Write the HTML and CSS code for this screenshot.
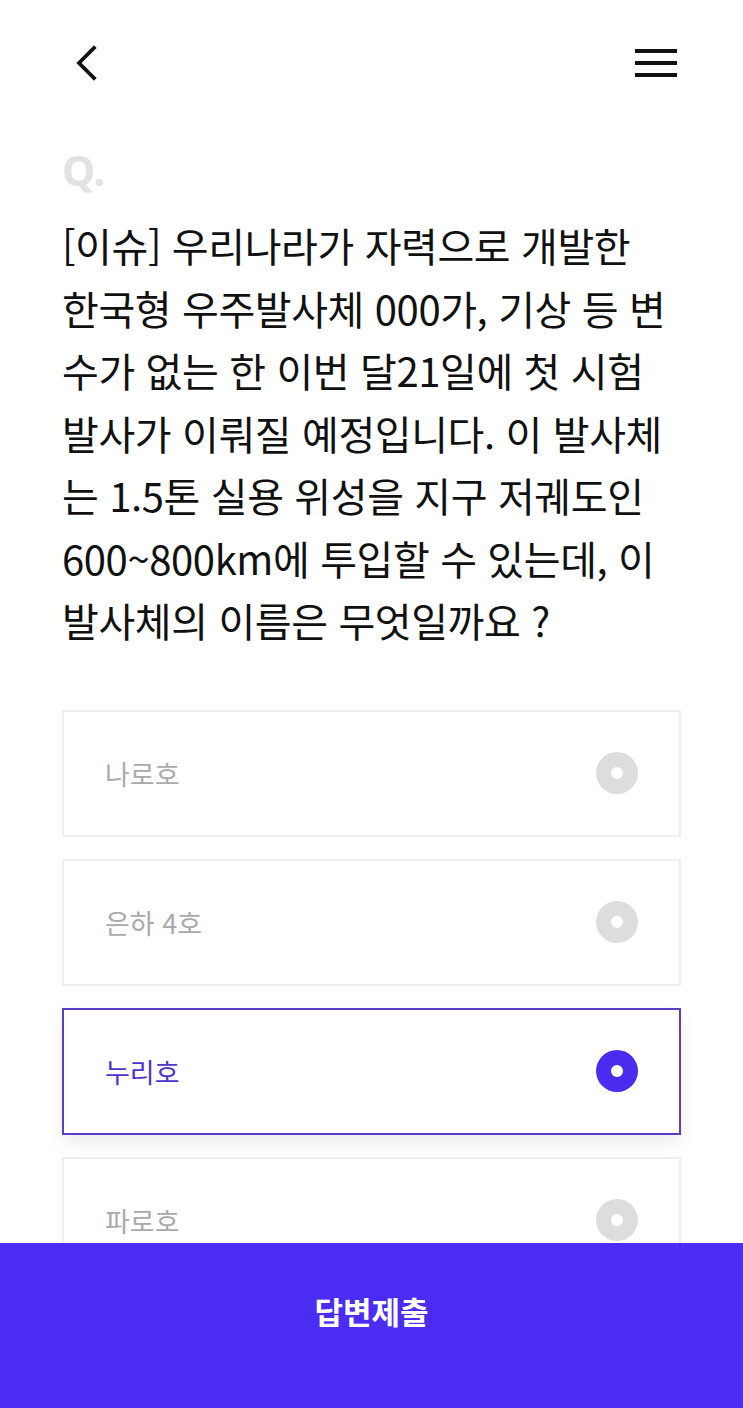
FILE: index.html
```html
<!DOCTYPE html>
<html lang="ko">
<head>
	<meta charset="utf-8">
	<title>퀴즈</title>
	<link rel="stylesheet" href="styles.css">
</head>
<body>

<header class="topbar">
	<a class="icon-btn" href="#" aria-label="뒤로">
		<svg width="22" height="36" viewBox="0 0 22 36"><polyline points="18,3 3,18 18,33" fill="none" stroke="#111" stroke-width="3.8" stroke-linecap="square"/></svg>
	</a>
	<a class="icon-btn" href="#" aria-label="메뉴">
		<svg width="42" height="32" viewBox="0 0 42 32"><rect x="0" y="2" width="42" height="4" fill="#111"/><rect x="0" y="14" width="42" height="4" fill="#111"/><rect x="0" y="26" width="42" height="4" fill="#111"/></svg>
	</a>
</header>

<main class="quiz">
	<div class="q-mark">Q.</div>
	<p class="question">[이슈] 우리나라가 자력으로 개발한<br>한국형 우주발사체 000가, 기상 등 변<br>수가 없는 한 이번 달21일에 첫 시험<br>발사가 이뤄질 예정입니다. 이 발사체<br>는 1.5톤 실용 위성을 지구 저궤도인<br>600~800km에 투입할 수 있는데, 이<br>발사체의 이름은 무엇일까요 ?</p>

	<ul class="choices">
		<li class="choice"><span class="label">나로호</span><span class="radio"></span></li>
		<li class="choice"><span class="label">은하 4호</span><span class="radio"></span></li>
		<li class="choice selected"><span class="label">누리호</span><span class="radio"></span></li>
		<li class="choice"><span class="label">파로호</span><span class="radio"></span></li>
	</ul>
</main>

<div class="submit-bar">답변제출</div>

</body>
</html>
```

FILE: styles.css
```css
html, body {
	margin: 0;
	padding: 0;
	background: #fff;
}
body {
	font-family: "Noto Sans CJK KR", "Noto Sans", sans-serif;
	color: #111;
}

.topbar {
	display: flex;
	justify-content: space-between;
	align-items: center;
	padding: 45px 66px 0 76px;
	height: 36px;
}
.icon-btn {
	display: flex;
	align-items: center;
}

.quiz {
	padding: 0 62px;
}
.q-mark {
	margin-top: 69px;
	font-family: "Noto Sans", sans-serif;
	font-weight: 700;
	font-size: 42px;
	line-height: 40px;
	color: #e2e2e2;
}
.question {
	margin: 24px 0 0 0;
	font-size: 40px;
	line-height: 62.5px;
	letter-spacing: -0.4px;
	white-space: nowrap;
}

.choices {
	list-style: none;
	margin: 58px 0 0 0;
	padding: 0;
	display: flex;
	flex-direction: column;
	gap: 22px;
}
.choice {
	display: flex;
	justify-content: space-between;
	align-items: center;
	height: 123px;
	padding: 0 41px;
	border: 2px solid #eeeeee;
	background: #fff;
}
.choice .label {
	font-size: 27px;
	color: #aaaaaa;
}
.radio {
	width: 42px;
	height: 42px;
	border-radius: 50%;
	background: #dddddd;
	display: flex;
	align-items: center;
	justify-content: center;
}
.radio::after {
	content: "";
	width: 12px;
	height: 12px;
	border-radius: 50%;
	background: #fff;
}
.choice.selected {
	border-color: #5a3cc6;
	box-shadow: 0 8px 18px rgba(0, 0, 0, 0.08);
}
.choice.selected .label {
	color: #4f33d0;
}
.choice.selected .radio {
	background: #4a2cf0;
}

.submit-bar {
	position: fixed;
	left: 0;
	right: 0;
	bottom: 0;
	height: 165px;
	background: #4b2cf2;
	color: #fff;
	font-weight: 700;
	font-size: 31px;
	display: flex;
	align-items: center;
	justify-content: center;
	padding-bottom: 30px;
	box-sizing: border-box;
}
```
